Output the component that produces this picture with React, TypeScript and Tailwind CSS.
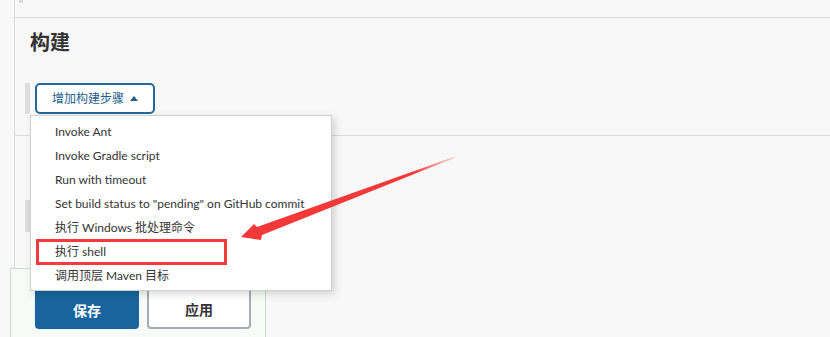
import React from "react";

const items = [
  "Invoke Ant",
  "Invoke Gradle script",
  "Run with timeout",
  'Set build status to "pending" on GitHub commit',
  "执行 Windows 批处理命令",
  "执行 shell",
  "调用顶层 Maven 目标",
];

const font = { fontFamily: '"Noto Sans", "Noto Sans CJK SC", sans-serif' };
const menuFont = { fontFamily: 'Lato, "Noto Sans CJK SC", sans-serif' };

export default function App() {
  return (
    <div
      className="relative w-[830px] h-[337px] overflow-hidden bg-[#f8f8f8] text-[#333]"
      style={font}
    >
      {/* main column with left rule */}
      <div className="ml-[14px] h-[268px] border-l border-[#dcdcdc] flex flex-col">
        <div className="h-[18px] shrink-0 border-b border-[#dadada] pl-[4px]">
          <div className="w-[4px] h-[3px] bg-[#dcdcdc]" />
        </div>
        <div className="pl-[15px] pt-[11px] h-[65px] shrink-0 text-[20px] font-bold leading-[28px] text-[#333]">
          构建
        </div>
        <div className="flex items-stretch h-[31px] shrink-0 pl-[10px]">
          <div className="w-[5px] bg-[#dedede]" />
          <button className="ml-[5px] w-[120px] h-[31px] rounded-[5px] border-2 border-[#1f6a9c] bg-white flex items-center justify-center gap-[6px] text-[12px] text-[#1f5f8c]">
            <span>增加构建步骤</span>
            <span className="w-0 h-0 border-l-[4px] border-r-[4px] border-b-[5px] border-l-transparent border-r-transparent border-b-[#1f5f8c]" />
          </button>
        </div>
        <div className="mt-[21px] shrink-0 border-t border-[#dadada]" />
        <div className="mt-[64px] ml-[10px] shrink-0 w-[5px] h-[32px] bg-[#dedede]" />
      </div>

      {/* bottom action bar */}
      <div className="absolute left-[10px] top-[268px] w-[256px] h-[80px] border border-[#c4dec9] bg-[#f7faf7] flex gap-[8px] pl-[24px] pt-[16px]">
        <button className="w-[104px] h-[44px] rounded-[4px] bg-[#17659c] text-white text-[14px] font-bold pt-[6px]">
          保存
        </button>
        <button className="w-[104px] h-[44px] rounded-[4px] border-2 border-[#a4adb5] bg-white text-[#333] text-[14px] font-bold pt-[4px]">
          应用
        </button>
      </div>

      {/* dropdown menu */}
      <div
        className="absolute left-[30px] top-[115px] w-[302px] h-[176px] bg-white border border-[#cfcfcf] shadow-[3px_3px_8px_rgba(0,0,0,0.15)] pt-[4px]"
        style={menuFont}
      >
        {items.map((t) => (
          <div key={t} className="h-[24px] pl-[24px] text-[12px] leading-[24px] text-[#333] whitespace-nowrap">
            {t}
          </div>
        ))}
      </div>

      {/* red highlight box */}
      <div className="absolute left-[36px] top-[239px] w-[191px] h-[26px] border-[3px] border-[#f23b3b]" />

      {/* red arrow */}
      <svg className="absolute left-0 top-0" width="830" height="337" viewBox="0 0 830 337">
        <defs>
          <linearGradient id="ar" x1="241" y1="238" x2="455" y2="157" gradientUnits="userSpaceOnUse">
            <stop offset="0" stopColor="#f23838" />
            <stop offset="0.8" stopColor="#f23838" />
            <stop offset="1" stopColor="#f23838" stopOpacity="0.2" />
          </linearGradient>
        </defs>
        <polygon
          points="241,237 254,224 257,227 455,156.5 455.5,157.5 262,235 261,240"
          fill="url(#ar)"
        />
      </svg>
    </div>
  );
}
